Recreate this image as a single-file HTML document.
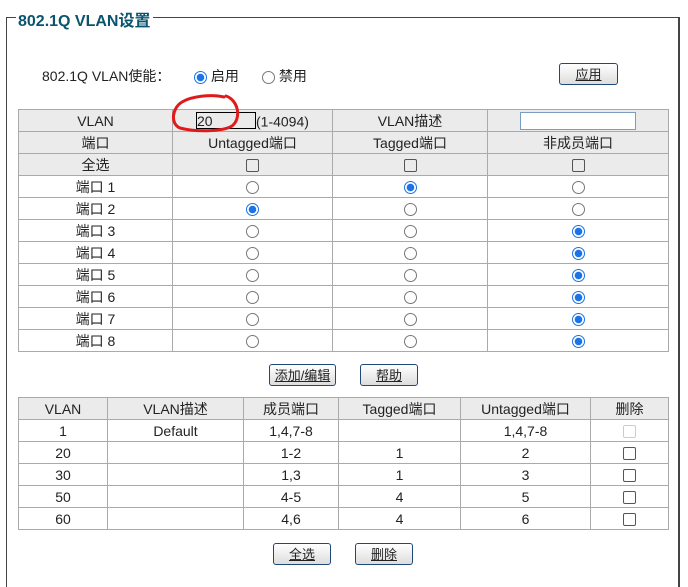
<!DOCTYPE html><html><head><meta charset="utf-8"><style>
html,body{margin:0;width:688px;height:587px;overflow:hidden}
body{background:#fff;font-family:"Liberation Sans","Noto Sans CJK SC",sans-serif;font-size:14px;color:#222;position:relative}
.fs{position:absolute;left:6px;top:17px;width:671px;height:570px;border:1px solid #444;border-right:2px solid #444;border-bottom:none}
.lg{position:absolute;left:16px;top:7px;background:#fff;padding:0 2px;color:#0b5470;font-weight:bold;font-size:16px}
table{position:absolute;border-collapse:collapse;table-layout:fixed}
td{border:1px solid #aaa;height:21px;padding:0;text-align:center;font-size:14px;line-height:16px}
.g td{background:#ebebeb}
.btn{position:absolute;height:20px;border:1px solid #1d4a7a;border-radius:3px;background:linear-gradient(#fff,#ddd);font-size:13px;text-align:center;line-height:22px;text-decoration:underline}
.r{display:inline-block;width:13px;height:13px;border:1px solid #777;border-radius:50%;vertical-align:middle;box-sizing:border-box}
.r.on{border:1px solid #1a73e8;background:radial-gradient(#1a73e8 3.5px,#fff 4px)}
.c{display:inline-block;width:13px;height:13px;border:1px solid #555;border-radius:2px;vertical-align:middle;box-sizing:border-box}
.c.d{border-color:#ccc}
</style></head><body>
<div class="fs"></div><div class="lg">802.1Q VLAN设置</div>
<div style="position:absolute;left:42px;top:66px">802.1Q VLAN使能：</div>
<div style="position:absolute;left:194px;top:66px"><span class="r on"></span> 启用</div>
<div style="position:absolute;left:262px;top:66px"><span class="r"></span> 禁用</div>
<div class="btn" style="left:559px;top:63px;width:57px">应用</div>
<table style="left:18px;top:109px;width:650px">
<col style="width:154px"><col style="width:160px"><col style="width:155px"><col style="width:181px">
<tr class="g"><td>VLAN</td><td style="text-align:left;padding-left:23px;white-space:nowrap"><span style="display:inline-block;width:60px;height:17px;border:1px solid #000;vertical-align:middle;text-align:left;line-height:16px;box-sizing:border-box">20</span><span style="vertical-align:middle">(1-4094)</span></td><td>VLAN描述</td><td><span style="display:inline-block;width:116px;height:18px;border:1px solid #7a9cc0;vertical-align:middle;background:#fff;box-sizing:border-box"></span></td></tr>
<tr class="g"><td>端口</td><td>Untagged端口</td><td>Tagged端口</td><td>非成员端口</td></tr>
<tr class="g"><td>全选</td><td><span class="c"></span></td><td><span class="c"></span></td><td><span class="c"></span></td></tr>
<tr><td>端口 1</td><td><span class="r"></span></td><td><span class="r on"></span></td><td><span class="r"></span></td></tr>
<tr><td>端口 2</td><td><span class="r on"></span></td><td><span class="r"></span></td><td><span class="r"></span></td></tr>
<tr><td>端口 3</td><td><span class="r"></span></td><td><span class="r"></span></td><td><span class="r on"></span></td></tr>
<tr><td>端口 4</td><td><span class="r"></span></td><td><span class="r"></span></td><td><span class="r on"></span></td></tr>
<tr><td>端口 5</td><td><span class="r"></span></td><td><span class="r"></span></td><td><span class="r on"></span></td></tr>
<tr><td>端口 6</td><td><span class="r"></span></td><td><span class="r"></span></td><td><span class="r on"></span></td></tr>
<tr><td>端口 7</td><td><span class="r"></span></td><td><span class="r"></span></td><td><span class="r on"></span></td></tr>
<tr><td>端口 8</td><td><span class="r"></span></td><td><span class="r"></span></td><td><span class="r on"></span></td></tr>
</table>
<svg style="position:absolute;left:0;top:0" width="688" height="587"><path d="M226 96 C238 100 242 118 232 126 C222 132 195 132 180 128 C170 124 172 108 182 102 C192 96 212 94 224 97" fill="none" stroke="#e01a1a" stroke-width="3" stroke-linecap="round"/></svg>
<div class="btn" style="left:269px;top:364px;width:65px">添加/编辑</div>
<div class="btn" style="left:360px;top:364px;width:56px">帮助</div>
<table style="left:18px;top:397px;width:650px">
<col style="width:89px"><col style="width:136px"><col style="width:95px"><col style="width:122px"><col style="width:130px"><col style="width:78px">
<tr class="g"><td>VLAN</td><td>VLAN描述</td><td>成员端口</td><td>Tagged端口</td><td>Untagged端口</td><td>删除</td></tr>
<tr><td>1</td><td>Default</td><td>1,4,7-8</td><td></td><td>1,4,7-8</td><td><span class="c d"></span></td></tr>
<tr><td>20</td><td></td><td>1-2</td><td>1</td><td>2</td><td><span class="c"></span></td></tr>
<tr><td>30</td><td></td><td>1,3</td><td>1</td><td>3</td><td><span class="c"></span></td></tr>
<tr><td>50</td><td></td><td>4-5</td><td>4</td><td>5</td><td><span class="c"></span></td></tr>
<tr><td>60</td><td></td><td>4,6</td><td>4</td><td>6</td><td><span class="c"></span></td></tr>
</table>
<div class="btn" style="left:273px;top:543px;width:56px">全选</div>
<div class="btn" style="left:355px;top:543px;width:56px">删除</div>
</body></html>
